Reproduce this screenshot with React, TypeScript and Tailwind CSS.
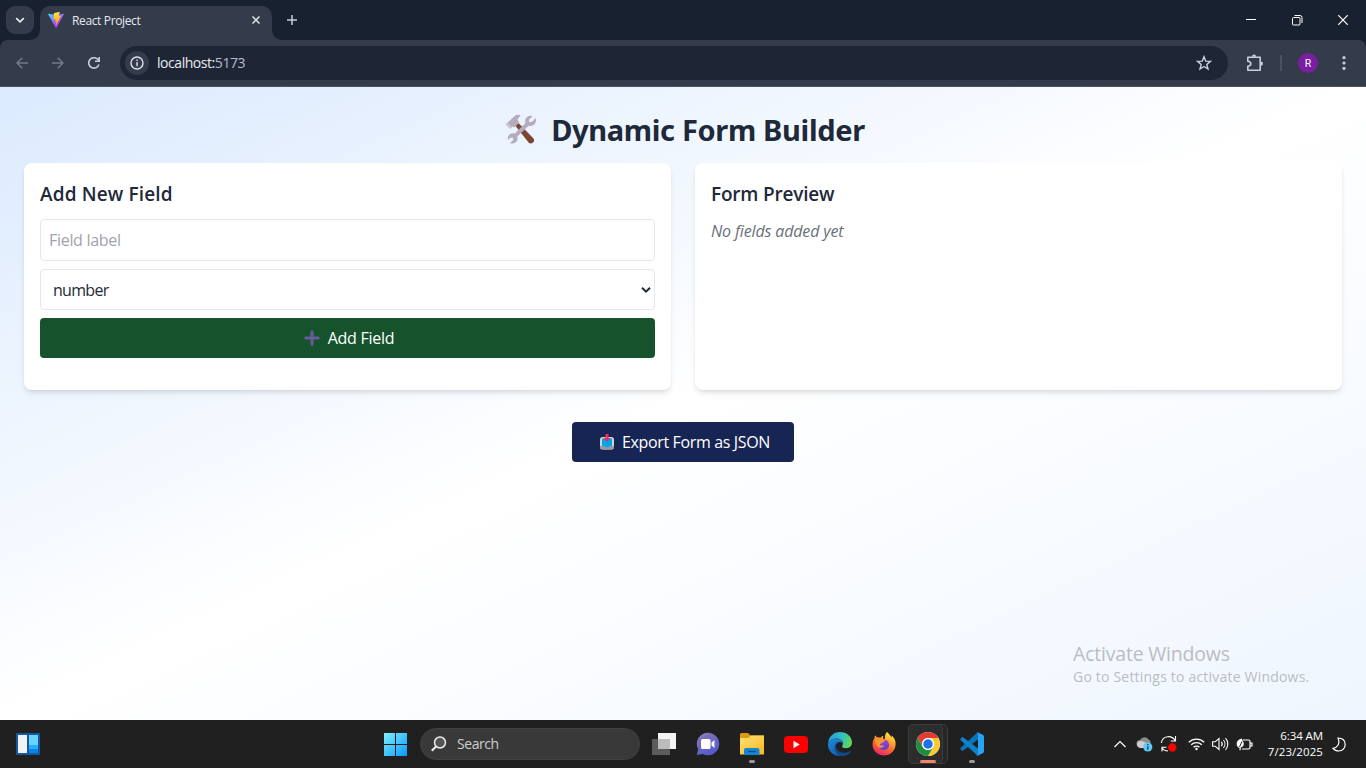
import type { ReactNode } from "react";

const uiFont = "font-['Open_Sans','Noto_Sans',sans-serif]";

function ViteLogo() {
  return (
    <svg width="16" height="16" viewBox="0 0 256 257">
      <defs>
        <linearGradient id="viteA" x1="-.8%" x2="57.6%" y1="7.7%" y2="78.4%">
          <stop offset="0%" stopColor="#41D1FF" />
          <stop offset="100%" stopColor="#BD34FE" />
        </linearGradient>
        <linearGradient id="viteB" x1="43.4%" x2="50.3%" y1="2.2%" y2="89%">
          <stop offset="0%" stopColor="#FFEA83" />
          <stop offset="8.3%" stopColor="#FFDD35" />
          <stop offset="100%" stopColor="#FFA800" />
        </linearGradient>
      </defs>
      <path fill="url(#viteA)" d="M255.153 37.938L134.897 252.976c-2.483 4.44-8.862 4.466-11.382.048L.875 37.958c-2.746-4.814 1.371-10.646 6.827-9.67l120.385 21.517a6.537 6.537 0 0 0 2.322-.004l117.867-21.483c5.438-.991 9.574 4.796 6.877 9.62Z" />
      <path fill="url(#viteB)" d="M185.432.063L96.44 17.501a3.268 3.268 0 0 0-2.634 3.014l-5.474 92.456a3.268 3.268 0 0 0 3.997 3.378l24.777-5.718c2.318-.535 4.413 1.507 3.936 3.838l-7.361 36.047c-.495 2.426 1.782 4.5 4.151 3.78l15.304-4.649c2.372-.72 4.652 1.36 4.15 3.788l-11.698 56.621c-.732 3.542 3.979 5.473 5.943 2.437l1.313-2.028l72.516-144.72c1.215-2.423-.88-5.186-3.54-4.672l-25.505 4.922c-2.396.462-4.435-1.77-3.759-4.114l16.646-57.705c.677-2.35-1.37-4.583-3.769-4.113Z" />
    </svg>
  );
}

function TitleBar() {
  return (
    <div className="flex h-10 items-start bg-[#182130]">
      <button className="mt-1.5 ml-1.5 flex size-7 items-center justify-center rounded-[9px] bg-[#343c4b]">
        <svg width="10" height="8" viewBox="0 0 10 8" fill="none" stroke="#e8eaed" strokeWidth="1.800">
          <path d="M1.200 2.200L5 5.800l3.800-3.600" />
        </svg>
      </button>
      <div className="relative mt-1.5 ml-1.5 flex h-[34px] w-[232px] items-center rounded-t-[10px] bg-[#343c4b] pb-[6px] pl-2">
        <svg className="absolute bottom-0 -left-2.5" width="10" height="10"><path d="M10 0v10H0A10 10 0 0 0 10 0z" fill="#343c4b" /></svg>
        <svg className="absolute -right-2.5 bottom-0" width="10" height="10"><path d="M0 0v10h10A10 10 0 0 1 0 0z" fill="#343c4b" /></svg>
        <ViteLogo />
        <span className="mt-0.5 ml-2 text-[12px] leading-4 tracking-[-0.36px] text-[#e6e8ee]">React Project</span>
        <svg className="mr-3 ml-auto" width="8" height="8" viewBox="0 0 8 8" stroke="#e3e6ed" strokeWidth="1.500">
          <path d="M.5.5l7 7M7.500.5l-7 7" />
        </svg>
      </div>
      <svg className="mt-[15px] ml-[15px]" width="10" height="10" viewBox="0 0 10 10" stroke="#c5cbdb" strokeWidth="1.500">
        <path d="M5 0v10M0 5h10" />
      </svg>
      <div className="mt-[14px] mr-[18px] ml-auto flex h-3 items-center">
        <svg width="10" height="12" viewBox="0 0 10 12"><path d="M0 5.500h10" stroke="#fff" /></svg>
        <svg className="ml-9" width="11" height="12" viewBox="0 0 11 12" fill="none" stroke="#fff">
          <rect x=".5" y="3.500" width="7.500" height="7.500" rx="1" />
          <path d="M2.500 1.500h5.500a2 2 0 0 1 2 2V9" />
        </svg>
        <svg className="ml-[35px]" width="10" height="12" viewBox="0 0 10 12" stroke="#fff" strokeWidth="1.200"><path d="M.2 1.200l9.600 9.600M9.800 1.200L.2 10.800" /></svg>
      </div>
    </div>
  );
}

function Toolbar() {
  return (
    <div className="bg-[#182130]">
      <div className="flex h-[47px] items-center rounded-t-[8px] border-b border-[#4b5260] bg-[#343c4b]">
        <svg className="ml-4" width="12" height="12" viewBox="0 0 12 12" fill="none" stroke="#737b8b" strokeWidth="1.500"><path d="M12 6H1M6.300.7L1 6l5.300 5.300" /></svg>
        <svg className="ml-6" width="12" height="12" viewBox="0 0 12 12" fill="none" stroke="#737b8b" strokeWidth="1.500"><path d="M0 6h11M5.700.7L11 6l-5.300 5.300" /></svg>
        <svg className="ml-6" width="12" height="12" viewBox="0 0 12 12" fill="none" stroke="#c7cddb" strokeWidth="1.600">
          <path d="M10.900 7.400A5.200 5.200 0 1 1 9.800 2.400L11 3.700" />
          <path d="M11.200 0v4.200H7" />
        </svg>
        <div className="ml-5 flex h-[34px] w-[1108px] items-center rounded-full bg-[#1e2636] pr-4 pl-[5px]">
          <span className="flex size-6 items-center justify-center rounded-full bg-[#343c4b]">
            <svg width="14" height="14" viewBox="0 0 14 14" fill="none" stroke="#dfe2e9" strokeWidth="1.400">
              <circle cx="7" cy="7" r="6" /><path d="M7 6v4.200M7 3.600v1.500" />
            </svg>
          </span>
          <span className="mb-0.5 ml-2 text-[14px] tracking-[-0.45px] text-[#e9ebf0]">
            localhost:<span className="text-[#b7bccb]">5173</span>
          </span>
          <svg className="ml-auto" width="16" height="16" viewBox="0 0 16 16" fill="none" stroke="#cdd1da" strokeWidth="1.400">
            <path d="M8 1.800l1.700 4.300 4.700.3-3.600 3 1.200 4.600L8 11.500 4 14l1.200-4.600-3.600-3 4.700-.3z" />
          </svg>
        </div>
        <svg className="ml-[18px]" width="18" height="18" viewBox="0 0 18 18">
          <path d="M1.800 3.200h12.400v13H1.800v-4q3-.2 3-2.500t-3-2.500z" fill="none" stroke="#c7cddb" strokeWidth="1.600" strokeLinejoin="round" />
          <path d="M5.900 2.700a2.100 2.100 0 0 1 4.200 0zM14.900 7.600a2.100 2.100 0 0 1 0 4.200z" fill="#c7cddb" />
        </svg>
        <span className="ml-4 h-4 w-0.5 bg-[#4a5261]" />
        <span className="ml-4 flex size-5 items-center justify-center rounded-full bg-[#7b1fa2] pt-0.5 font-[Roboto] text-[10.500px] text-white">R</span>
        <svg className="ml-6" width="4" height="14" viewBox="0 0 4 14" fill="#c7cddb"><circle cx="2" cy="1.700" r="1.600" /><circle cx="2" cy="7" r="1.600" /><circle cx="2" cy="12.300" r="1.600" /></svg>
      </div>
    </div>
  );
}

function ToolsIcon() {
  return (
    <svg width="32" height="32" viewBox="0 0 32 32">
      <path d="M10.500 12l3-3L28.500 24.500q1.500 2.500-.5 4t-4 .5z" fill="#7d4533" />
      <path d="M1 10L8.500 3q3.500-3.300 7-1.700L12.500 5.500l1.500 3.200-5 4.800-1.500-1-1.500 1.300z" fill="#b4acbc" />
      <path d="M.5 10.200l2.200-1.800 4.500 4.800L5 15z" fill="#cdc4d6" />
      <path d="M27.500 2.200L23.800 6l.8 2.300 2.600-.5L30.500 4q1.200 3.500-.8 6-2.400 2.700-6 1.800L12.300 22.500q1 3.500-1.300 5.500-2.700 2.300-6 1.300l3.300-3.300-.6-2.400-2.700.5L3 26q-.8-3.400 1.200-5.300 2.200-1.900 5.600-1.200L20.500 9q-1-3.500 1-5.600 2.600-2.300 6-1.200z" fill="#b4acbc" />
    </svg>
  );
}

function ExportIcon() {
  return (
    <svg width="14" height="16" viewBox="0 0 14 16">
      <rect y="3" width="14" height="12.500" rx="2.500" fill="#d3d3d3" />
      <path d="M0 12h14v1q0 2.500-2.500 2.500h-9Q0 15.500 0 13z" fill="#9b9b9b" />
      <path d="M2 4.500h10v7.500H9.500l-1 1.200h-3L4.500 12H2z" fill="#00a6ed" />
      <path d="M5.500 0h3v4h2.300L7 8 3.200 4h2.300z" fill="#e8305c" />
    </svg>
  );
}

function FormBuilder() {
  return (
    <main className="relative h-[633px] bg-gradient-to-br from-[#dbeafe] via-white to-[#eff6ff] p-6 text-[#1e2939]">
      <h1 className="mb-4 flex h-9 items-center justify-center pl-1">
        <span className="flex w-[46px] pt-0.5"><ToolsIcon /></span>
        <span className="mt-px font-['Noto_Sans'] text-[29px] leading-9 font-bold tracking-[-0.33px]">Dynamic Form Builder</span>
      </h1>
      <div className="grid grid-cols-2 gap-6">
        <section className="h-[227px] rounded-lg bg-white p-4 shadow-md">
          <h2 className="mb-3 pt-0.5 text-[19px] leading-[26px] font-semibold tracking-[0.14px]">Add New Field</h2>
          <input className="mb-2 block h-[42px] w-full rounded border border-[#e5e7eb] px-2 text-base tracking-[-0.3px] placeholder:text-[#a1a3ac]" placeholder="Field label" />
          <div className="mb-2 flex h-[41px] items-center justify-between rounded border border-[#e5e7eb] pr-[3px] pl-3">
            <span className="pt-px text-base leading-6 tracking-[-0.7px]">number</span>
            <svg width="10" height="8" viewBox="0 0 10 8" fill="none" stroke="#1e2939" strokeWidth="2"><path d="M1 1.700l4 4 4-4" /></svg>
          </div>
          <button className="flex h-10 w-full items-center justify-center gap-2 rounded bg-[#16532d] pl-[3px] text-base tracking-[-0.25px] text-white">
            <svg width="16" height="16" viewBox="0 0 16 16" stroke="#6b5b9a" strokeWidth="3" strokeLinecap="round"><path d="M8 1.800v12.400M1.800 8h12.400" /></svg>
            Add Field
          </button>
        </section>
        <section className="h-[227px] rounded-lg bg-white p-4 shadow-md">
          <h2 className="mb-3 pt-0.5 text-[19px] leading-[26px] font-semibold tracking-[-0.2px]">Form Preview</h2>
          <p className="text-base leading-6 tracking-[-0.15px] text-[#697078] italic">No fields added yet</p>
        </section>
      </div>
      <div className="mt-8 flex justify-center">
        <button className="flex h-10 w-[222px] items-center justify-end gap-2 rounded bg-[#172554] pr-6 text-base tracking-[-0.35px] whitespace-nowrap text-white">
          <ExportIcon />
          Export Form as JSON
        </button>
      </div>
      <div className="absolute top-[554px] left-[1073px] whitespace-nowrap text-[#babdc2]">
        <div className="text-[19.500px] leading-[26px] tracking-[-0.2px]">Activate Windows</div>
        <div className="text-[14px] leading-5 tracking-[0.2px]">Go to Settings to activate Windows.</div>
      </div>
    </main>
  );
}

function TaskItem({ children, running }: { children: ReactNode; running?: boolean }) {
  return (
    <div className="relative flex h-12 w-11 items-center justify-center">
      {children}
      {running && <span className="absolute bottom-[5px] h-[3px] w-1.5 rounded-full bg-[#9a9a9a]" />}
    </div>
  );
}

function ChatIcon() {
  return (
    <svg width="24" height="24" viewBox="0 0 24 24">
      <defs><linearGradient id="chat" x1="0" y1="0" x2=".6" y2="1"><stop stopColor="#8d8fd8" /><stop offset=".3" stopColor="#7b6fb8" /><stop offset="1" stopColor="#5558cf" /></linearGradient></defs>
      <path d="M12 .8a11.200 11.200 0 1 1-5 21.200l-6.300 1 1.500-5.500A11.200 11.200 0 0 1 12 .8z" fill="url(#chat)" />
      <rect x="5" y="7" width="9.500" height="10" rx="1.500" fill="#fff" />
      <path d="M15.500 10.500L18.500 8v8l-3-2.500z" fill="#fff" />
    </svg>
  );
}

function FolderIcon() {
  return (
    <svg width="24" height="24" viewBox="0 0 24 24">
      <defs><linearGradient id="folder" x1="0" y1="0" x2="1" y2="1"><stop stopColor="#ffdf7a" /><stop offset="1" stopColor="#f8b91c" /></linearGradient></defs>
      <path d="M0 2.500Q0 1 1.500 1H8l2.500 2.500H24V8H0z" fill="#dd9c10" />
      <path d="M0 6h8.500L11 3.500h13v19H0z" fill="url(#folder)" />
      <path d="M4 23v-5q0-2 2-2h11.500q2 0 2 2v5z" fill="#1585d2" />
      <path d="M8 19.500h8" stroke="#0b4f91" strokeWidth="1.300" />
    </svg>
  );
}

function YoutubeIcon() {
  return (
    <svg width="24" height="17" viewBox="0 0 24 17">
      <rect width="24" height="17" rx="4" fill="#f00" /><path d="M9.500 4.800v7.400l6.200-3.700z" fill="#fff" />
    </svg>
  );
}

function EdgeIcon() {
  return (
    <svg width="24" height="24" viewBox="0 0 24 24">
      <defs>
        <linearGradient id="edgeTop" x1="0" y1=".3" x2="1" y2=".6"><stop stopColor="#299bdc" /><stop offset=".5" stopColor="#2fc0c4" /><stop offset="1" stopColor="#62da50" /></linearGradient>
        <linearGradient id="edgeSide" x1="0" y1="0" x2=".4" y2="1"><stop stopColor="#1c8bdc" /><stop offset="1" stopColor="#1263b5" /></linearGradient>
      </defs>
      <path d="M0 11.500C.7 4.500 5.500 0 12 0c7 0 12 5 12 10.500 0 3.500-2.500 5.700-6 5.700-2.500 0-4-1-4-2 0-.8 1-1.200 1-3 0-2.500-3-5-7.500-4.700C4 6.700 1.300 8.500 0 11.500z" fill="url(#edgeTop)" />
      <path d="M0 12c.5-3 4-5.500 7.500-5.500 4.300 0 7.500 2 7.500 5.300-1-2-4-2.700-6-.8-2.500 2.400-1 9 5 12.500C6 25.500-.5 19 0 12z" fill="url(#edgeSide)" />
      <path d="M9.800 10.200c-4 2.500-1.500 9 3.700 10.300 3.500.9 6.500-.3 8.800-1.600.7-.4 1.100.2.6.8C21 22.500 18 24 14 24 9 23 6 19 6.500 15c.2-2 1.300-4 3.300-4.800z" fill="#114a8b" />
    </svg>
  );
}

function FirefoxIcon() {
  return (
    <svg width="24" height="24" viewBox="0 0 24 24">
      <defs>
        <linearGradient id="fox" x1=".8" y1="0" x2=".3" y2="1"><stop stopColor="#fff44f" /><stop offset=".3" stopColor="#ffb52b" /><stop offset=".6" stopColor="#ff6a2a" /><stop offset="1" stopColor="#ed1f70" /></linearGradient>
        <linearGradient id="globe" x1=".2" y1="0" x2=".5" y2="1"><stop stopColor="#a04bdb" /><stop offset="1" stopColor="#5b3fd0" /></linearGradient>
      </defs>
      <path d="M15 0c2.500 2 3 3.500 4.500 5.500.3-.7 0-1.500 0-2C23 6 24 10 23.500 13.500 22.700 19.500 18 23.500 12 23.500S.5 19 .5 12.500c0-3 1-5 2-6.500 0-1 .2-2 .8-2.800.4 1 1 1.600 1.700 2 1.200-.1 2.400.1 3.500.6C9.200 4.500 10.500 4 11.500 4c-.5 1-.7 1.500-.5 2.500l2 .5C12.500 4 13.500 1.500 15 0z" fill="url(#fox)" />
      <circle cx="11.800" cy="12.800" r="5.300" fill="url(#globe)" />
      <path d="M3 6.500c3-1.500 5 0 6 1 1.500-.5 3 .2 4 1.500l-3.500 2.200c-.8.500-1.500.3-1.700 1.800 1.200.8 3 .2 4.400 1-1.500 1.600-4.500 2.500-6.700.5C3.500 13 3 9.500 3 6.500z" fill="#ff9528" />
    </svg>
  );
}

function ChromeIcon() {
  return (
    <svg width="24" height="24" viewBox="0 0 48 48">
      <circle cx="24" cy="24" r="24" fill="#fff" />
      <path d="M24 12h20.780A24 24 0 0 0 3.220 12l10.390 18A12 12 0 0 1 24 12z" fill="#e33b2e" />
      <path d="M34.390 30L24 48A24 24 0 0 0 44.780 12H24a12 12 0 0 1 10.390 18z" fill="#fcc934" />
      <path d="M13.610 30L3.220 12A24 24 0 0 0 24 48l10.390-18a12 12 0 0 1-20.780 0z" fill="#1e8e3e" />
      <circle cx="24" cy="24" r="12" fill="#fff" /><circle cx="24" cy="24" r="9.500" fill="#1a73e8" />
    </svg>
  );
}

function CodeIcon() {
  return (
    <svg width="24" height="24" viewBox="0 0 24 24">
      <path d="M1 15.500L16.500 1.300Q17.500.4 18.700 1V7L3 18.700q-.7.400-1.300-.1L.5 17.300q-.6-1 .5-1.800z" fill="#0a72b8" />
      <path d="M1 8.500l15.500 14.200q1 .9 2.200.3V17L3 5.300q-.7-.4-1.300.1L.5 6.700q-.6 1 .5 1.800z" fill="#1080cc" />
      <path d="M18 .5l4.800 2.300Q24 3.400 24 4.600v14.800q0 1.200-1.200 1.800L18 23.500q-1 .4-1.800-.5 1.500.3 1.800-1V2q-.3-1.300-1.800-1 .8-.9 1.800-.5z" fill="#26a3f3" />
    </svg>
  );
}

function Tray() {
  return (
    <div className="ml-auto flex items-center text-white">
      <svg width="12" height="8" viewBox="0 0 12 8" fill="none" stroke="#fff" strokeWidth="1.200"><path d="M.5 7L6 1.500 11.500 7" /></svg>
      <svg className="ml-2.5" width="17" height="16" viewBox="0 0 17 16">
        <path d="M4 11a3.500 3.500 0 0 1 0-7 5 5 0 0 1 8.500-.5c2 .5 2.500 3 1.500 5.500L9 11z" fill="#8c8c8c" />
        <path d="M4 12a3.500 3.500 0 0 1-.5-6.800C6 4 9 6.500 12 8l-3 4z" fill="#cecece" />
        <circle cx="11.800" cy="11" r="4.600" fill="#5fc8fa" /><path d="M11.800 10.300v3.400M11.800 8v1.300" stroke="#123e58" strokeWidth="1.300" />
      </svg>
      <svg className="ml-[7px]" width="18" height="18" viewBox="0 0 18 18" fill="none" stroke="#fff" strokeWidth="1.100">
        <path d="M1.300 8C2.500 0 12 0 15 5.500M15.500 1v5h-4.700M2 16.500v-4.200h4.500M2 12.500c1 2 3.500 3.500 6 3.500" />
        <circle cx="12.300" cy="12.500" r="4.200" fill="#f00" stroke="none" />
      </svg>
      <svg className="ml-2.5" width="17" height="14" viewBox="0 0 17 14" fill="none" stroke="#fff" strokeWidth="1.300">
        <path d="M.8 5.300a10.800 10.800 0 0 1 15.400 0M3.200 7.800a7.400 7.400 0 0 1 10.600 0M5.600 10.300a4.100 4.100 0 0 1 5.800 0" /><circle cx="8.500" cy="12" r="1.200" fill="#fff" stroke="none" />
      </svg>
      <svg className="ml-[7px]" width="17" height="14" viewBox="0 0 17 14" fill="none" stroke="#fff" strokeWidth="1.100">
        <path d="M.6 4.800h2.600L7 1.500v11L3.200 9.200H.6zM9.300 4.800a3.300 3.300 0 0 1 0 4.400M11.400 3a6 6 0 0 1 0 8M13.500 1.200a8.500 8.500 0 0 1 0 11.600" />
      </svg>
      <svg className="ml-[7px]" width="17" height="13" viewBox="0 0 17 13" fill="none" stroke="#fff" strokeWidth="1.200">
        <path d="M6.500 2h6q1.500 0 1.500 1.500v6q0 1.500-1.500 1.500H6M14.500 5h1.500v3h-1.500" />
        <path d="M5.500.6C2 1.500.3 4 .8 7c.2 1.500 1.200 2.500 2.700 2.700v2.500h1.200V9.500C7 9 8.500 7 7.500 4.500z" fill="#fff" stroke="none" />
        <path d="M6 3.500L3.500 9" stroke="#202020" strokeWidth="1" />
      </svg>
      <div className="ml-[13px] w-[57px] text-right text-[11.500px] leading-4 whitespace-nowrap">
        <div className="tracking-[-0.1px]">6:34 AM</div><div className="tracking-[0.08px]">7/23/2025</div>
      </div>
      <svg className="mr-5 ml-[9px]" width="14" height="15" viewBox="0 0 14 15" fill="none" stroke="#fff" strokeWidth="1.200"><path d="M6 1c5 0 7.200 3 7.200 6.500S10.500 14 7 14c-2.700 0-4.700-1-6-2.700C5 11 8.500 7 6 1z" /></svg>
    </div>
  );
}

function Taskbar() {
  return (
    <footer className="flex h-12 items-center bg-[#202020]">
      <svg className="ml-4" width="24" height="22" viewBox="0 0 24 22">
        <rect width="24" height="22" rx="1" fill="#1357a0" /><rect x="2" y="2" width="9" height="18" fill="#f2f2f2" />
        <rect x="13" y="2" width="9" height="10" fill="#67d5ff" /><rect x="13" y="12" width="9" height="4" fill="#28adf8" /><rect x="13" y="16" width="9" height="4" fill="#0a84e8" />
      </svg>
      <div className="ml-[334px] flex items-center">
        <TaskItem>
          <svg width="24" height="24" viewBox="0 0 24 24">
            <defs><linearGradient id="win" x1="0" y1="0" x2="24" y2="24" gradientUnits="userSpaceOnUse"><stop stopColor="#80f1ff" /><stop offset="1" stopColor="#0796ff" /></linearGradient></defs>
            <path d="M0 1h11v11H0zM12 1h11v11H12zM0 13h11v11H0zM12 13h11v11H12z" fill="url(#win)" />
          </svg>
        </TaskItem>
        <div className="mr-0.5 ml-0.5 flex h-8 w-[220px] items-center rounded-full border border-[#424242] bg-[#393939] pl-[10px]">
          <svg width="16" height="16" viewBox="0 0 16 16" stroke="#eee" strokeWidth="1.500"><circle cx="9" cy="6.500" r="5.500" fill="#555" /><path d="M5 10.500L.8 14.800" strokeWidth="2" /></svg>
          <span className="mb-px ml-2.5 text-[14px] tracking-[-0.45px] text-[#cfcfcf]">Search</span>
        </div>
        <TaskItem>
          <svg width="24" height="22" viewBox="0 0 24 22"><rect x="6" width="18" height="16" fill="#f4f4f4" /><rect y="6" width="18" height="16" fill="#5c5c5c" /><path d="M6 6h12v10H6z" fill="#bcbcbc" /></svg>
        </TaskItem>
        <TaskItem><ChatIcon /></TaskItem>
        <TaskItem running><FolderIcon /></TaskItem>
        <TaskItem><YoutubeIcon /></TaskItem>
        <TaskItem><EdgeIcon /></TaskItem>
        <TaskItem><FirefoxIcon /></TaskItem>
        <div className="relative flex h-12 w-11 items-center justify-center">
          <span className="absolute top-1 left-0.5 h-10 w-10 rounded-[5px] border border-[#3b3b3b] bg-[#262626]" />
          <span className="absolute top-1 left-0.5 h-10 w-[35px] rounded-[5px] border border-[#3c3c3c] bg-[#2d2d2d]" />
          <span className="relative"><ChromeIcon /></span>
          <span className="absolute bottom-[5px] h-[3px] w-4 rounded-full bg-[#f4836b]" />
        </div>
        <TaskItem running><CodeIcon /></TaskItem>
      </div>
      <Tray />
    </footer>
  );
}

export default function App() {
  return (
    <div className={`h-[768px] w-[1366px] overflow-hidden ${uiFont}`}>
      <TitleBar />
      <Toolbar />
      <FormBuilder />
      <Taskbar />
    </div>
  );
}
